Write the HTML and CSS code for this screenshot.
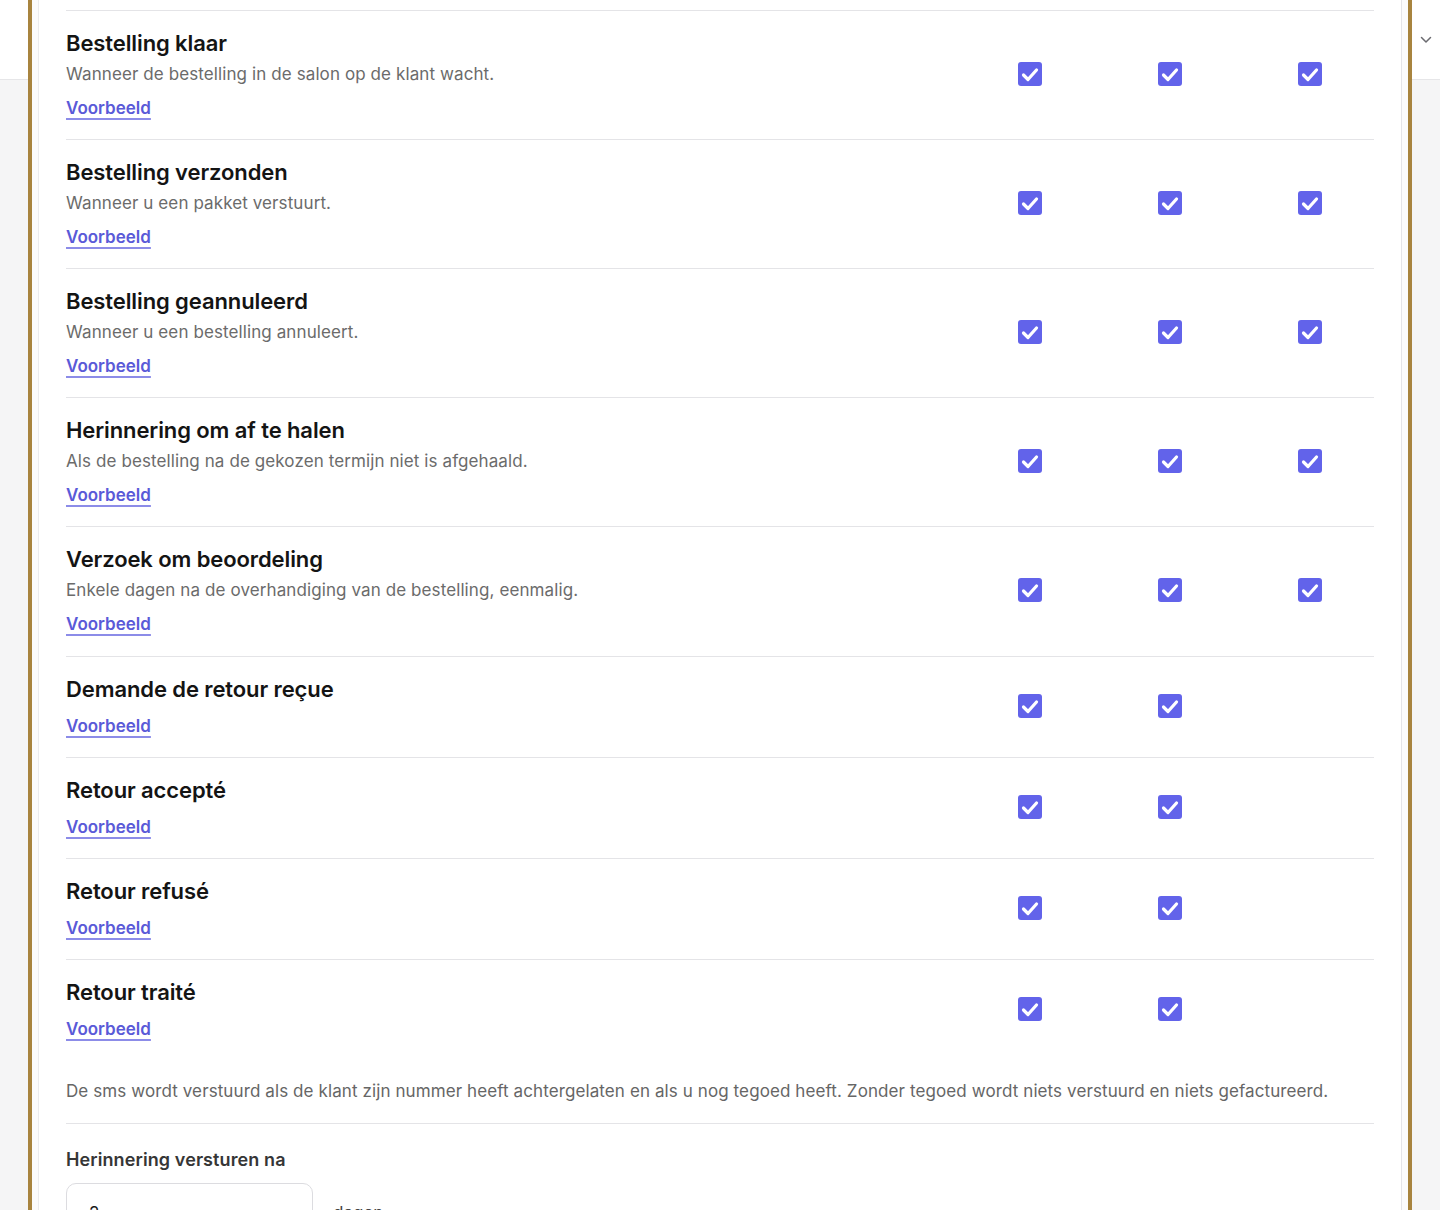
FILE: index.html
```html
<!DOCTYPE html>
<html lang="nl">
<head>
    <meta charset="UTF-8">
    <meta name="viewport" content="width=device-width, initial-scale=1.0">
    <title>Meldingen</title>
    <link rel="stylesheet" href="styles.css">
</head>
<body>
    <div class="page">
        <div class="gutter"></div>

        <div class="panel">
            <div class="card">
                <div class="row">
                    <div class="info">
                        <h3 class="title">Bestelling klaar</h3>
                        <p class="desc">Wanneer de bestelling in de salon op de klant wacht.</p>
                        <a class="link" href="#">Voorbeeld</a>
                    </div>
                    <div class="channels">
                        <span class="check"><svg viewBox="0 0 24 24"><rect width="24" height="24" rx="3"/><path d="M5.5 13 10 17.5 18.5 8"/></svg></span>
                        <span class="check"><svg viewBox="0 0 24 24"><rect width="24" height="24" rx="3"/><path d="M5.5 13 10 17.5 18.5 8"/></svg></span>
                        <span class="check"><svg viewBox="0 0 24 24"><rect width="24" height="24" rx="3"/><path d="M5.5 13 10 17.5 18.5 8"/></svg></span>
                    </div>
                </div>

                <div class="row">
                    <div class="info">
                        <h3 class="title">Bestelling verzonden</h3>
                        <p class="desc">Wanneer u een pakket verstuurt.</p>
                        <a class="link" href="#">Voorbeeld</a>
                    </div>
                    <div class="channels">
                        <span class="check"><svg viewBox="0 0 24 24"><rect width="24" height="24" rx="3"/><path d="M5.5 13 10 17.5 18.5 8"/></svg></span>
                        <span class="check"><svg viewBox="0 0 24 24"><rect width="24" height="24" rx="3"/><path d="M5.5 13 10 17.5 18.5 8"/></svg></span>
                        <span class="check"><svg viewBox="0 0 24 24"><rect width="24" height="24" rx="3"/><path d="M5.5 13 10 17.5 18.5 8"/></svg></span>
                    </div>
                </div>

                <div class="row">
                    <div class="info">
                        <h3 class="title">Bestelling geannuleerd</h3>
                        <p class="desc">Wanneer u een bestelling annuleert.</p>
                        <a class="link" href="#">Voorbeeld</a>
                    </div>
                    <div class="channels">
                        <span class="check"><svg viewBox="0 0 24 24"><rect width="24" height="24" rx="3"/><path d="M5.5 13 10 17.5 18.5 8"/></svg></span>
                        <span class="check"><svg viewBox="0 0 24 24"><rect width="24" height="24" rx="3"/><path d="M5.5 13 10 17.5 18.5 8"/></svg></span>
                        <span class="check"><svg viewBox="0 0 24 24"><rect width="24" height="24" rx="3"/><path d="M5.5 13 10 17.5 18.5 8"/></svg></span>
                    </div>
                </div>

                <div class="row">
                    <div class="info">
                        <h3 class="title">Herinnering om af te halen</h3>
                        <p class="desc">Als de bestelling na de gekozen termijn niet is afgehaald.</p>
                        <a class="link" href="#">Voorbeeld</a>
                    </div>
                    <div class="channels">
                        <span class="check"><svg viewBox="0 0 24 24"><rect width="24" height="24" rx="3"/><path d="M5.5 13 10 17.5 18.5 8"/></svg></span>
                        <span class="check"><svg viewBox="0 0 24 24"><rect width="24" height="24" rx="3"/><path d="M5.5 13 10 17.5 18.5 8"/></svg></span>
                        <span class="check"><svg viewBox="0 0 24 24"><rect width="24" height="24" rx="3"/><path d="M5.5 13 10 17.5 18.5 8"/></svg></span>
                    </div>
                </div>

                <div class="row wide">
                    <div class="info">
                        <h3 class="title">Verzoek om beoordeling</h3>
                        <p class="desc">Enkele dagen na de overhandiging van de bestelling, eenmalig.</p>
                        <a class="link" href="#">Voorbeeld</a>
                    </div>
                    <div class="channels">
                        <span class="check"><svg viewBox="0 0 24 24"><rect width="24" height="24" rx="3"/><path d="M5.5 13 10 17.5 18.5 8"/></svg></span>
                        <span class="check"><svg viewBox="0 0 24 24"><rect width="24" height="24" rx="3"/><path d="M5.5 13 10 17.5 18.5 8"/></svg></span>
                        <span class="check"><svg viewBox="0 0 24 24"><rect width="24" height="24" rx="3"/><path d="M5.5 13 10 17.5 18.5 8"/></svg></span>
                    </div>
                </div>

                <!-- retouren: geen push-kanaal -->
                <div class="row">
                    <div class="info">
                        <h3 class="title">Demande de retour reçue</h3>
                        <a class="link" href="#">Voorbeeld</a>
                    </div>
                    <div class="channels">
                        <span class="check"><svg viewBox="0 0 24 24"><rect width="24" height="24" rx="3"/><path d="M5.5 13 10 17.5 18.5 8"/></svg></span>
                        <span class="check"><svg viewBox="0 0 24 24"><rect width="24" height="24" rx="3"/><path d="M5.5 13 10 17.5 18.5 8"/></svg></span>
                        <span class="check empty"></span>
                    </div>
                </div>

                <div class="row">
                    <div class="info">
                        <h3 class="title">Retour accepté</h3>
                        <a class="link" href="#">Voorbeeld</a>
                    </div>
                    <div class="channels">
                        <span class="check"><svg viewBox="0 0 24 24"><rect width="24" height="24" rx="3"/><path d="M5.5 13 10 17.5 18.5 8"/></svg></span>
                        <span class="check"><svg viewBox="0 0 24 24"><rect width="24" height="24" rx="3"/><path d="M5.5 13 10 17.5 18.5 8"/></svg></span>
                        <span class="check empty"></span>
                    </div>
                </div>

                <div class="row">
                    <div class="info">
                        <h3 class="title">Retour refusé</h3>
                        <a class="link" href="#">Voorbeeld</a>
                    </div>
                    <div class="channels">
                        <span class="check"><svg viewBox="0 0 24 24"><rect width="24" height="24" rx="3"/><path d="M5.5 13 10 17.5 18.5 8"/></svg></span>
                        <span class="check"><svg viewBox="0 0 24 24"><rect width="24" height="24" rx="3"/><path d="M5.5 13 10 17.5 18.5 8"/></svg></span>
                        <span class="check empty"></span>
                    </div>
                </div>

                <div class="row">
                    <div class="info">
                        <h3 class="title">Retour traité</h3>
                        <a class="link" href="#">Voorbeeld</a>
                    </div>
                    <div class="channels">
                        <span class="check"><svg viewBox="0 0 24 24"><rect width="24" height="24" rx="3"/><path d="M5.5 13 10 17.5 18.5 8"/></svg></span>
                        <span class="check"><svg viewBox="0 0 24 24"><rect width="24" height="24" rx="3"/><path d="M5.5 13 10 17.5 18.5 8"/></svg></span>
                        <span class="check empty"></span>
                    </div>
                </div>

                <p class="note">De sms wordt verstuurd als de klant zijn nummer heeft achtergelaten en als u nog tegoed heeft. Zonder tegoed wordt niets verstuurd en niets gefactureerd.</p>

                <div class="reminder">
                    <label class="label" for="dagen">Herinnering versturen na</label>
                    <div class="field">
                        <input type="text" id="dagen" class="input" value="2">
                        <span class="unit">dagen</span>
                    </div>
                </div>
            </div>
        </div>

        <div class="gutter right">
            <svg class="chevron" viewBox="0 0 12 8"><path d="M1.5 1.5 6 6 10.5 1.5"/></svg>
        </div>
    </div>
</body>
</html>
```

FILE: styles.css
```css
html, body {
    margin: 0;
    overflow: hidden;
}
body {
    font-family: Inter, "Noto Sans", sans-serif;
    color: #1a1a1a;
    /* witte topbalk achter het paneel */
    background: linear-gradient(#ffffff 0 79px, #e6e6e8 79px 80px, #f5f5f6 80px);
}
.page {
    display: grid;
    grid-template-columns: 32px 1fr 32px;
    min-height: 100vh;
}
.gutter.right {
    display: flex;
    justify-content: center;
    padding: 36px 0 0 4px;
}
.chevron {
    width: 12px;
    height: 8px;
    fill: none;
    stroke: #6b6b70;
    stroke-width: 1.5;
    stroke-linecap: round;
    stroke-linejoin: round;
}
.panel {
    outline: 4px solid #a8843f;
    background-color: #fbfbfc;
}
.card {
    margin-left: 6px;
    width: 1364px;
    box-sizing: border-box;
    background-color: #ffffff;
    border-left: 1px solid #ebebee;
    border-right: 1px solid #e4e4e8;
    padding: 10px 27px 0 27px;
    min-height: 1400px;
}
.row {
    display: flex;
    align-items: center;
    border-top: 1px solid #e4e4e7;
    padding: 18px 0 19px;
}
.row.wide {
    padding-bottom: 20px;
}
.info {
    flex: 1;
}
.title {
    margin: 0;
    font-size: 22px;
    line-height: 28px;
    font-weight: 600;
    color: #141414;
    letter-spacing: -0.1px;
}
.desc {
    margin: 5px 0 0;
    font-size: 17px;
    line-height: 24px;
    color: #6b6b6b;
    letter-spacing: 0.1px;
}
.link {
    display: inline-block;
    margin-top: 11px;
    font-size: 17px;
    line-height: 24px;
    font-weight: 600;
    color: #5a5ad8;
    text-decoration: underline;
    text-decoration-color: #8c8ce8;
    text-decoration-thickness: 2px;
    text-underline-offset: 4px;
}
.desc + .link {
    margin-top: 10px;
}
.channels {
    display: flex;
    gap: 116px;
    padding-right: 52px;
    margin-bottom: 2px;
}
.check {
    width: 24px;
    height: 24px;
    display: block;
}
.check svg {
    display: block;
    width: 24px;
    height: 24px;
}
.check rect {
    fill: #6263ea;
}
.check path {
    fill: none;
    stroke: #ffffff;
    stroke-width: 3.2;
    stroke-linecap: round;
    stroke-linejoin: round;
}
.note {
    margin: 19px 0 0;
    padding-bottom: 20px;
    border-bottom: 1px solid #e4e4e7;
    font-size: 17px;
    line-height: 24px;
    color: #666666;
    letter-spacing: 0.1px;
}
.reminder {
    padding-top: 24px;
}
.label {
    display: block;
    font-size: 18px;
    line-height: 24px;
    font-weight: 600;
    color: #363636;
    letter-spacing: 0.1px;
}
.field {
    display: flex;
    align-items: center;
    gap: 20px;
    margin-top: 11px;
}
.input {
    width: 247px;
    height: 60px;
    box-sizing: border-box;
    border: 1px solid #dcdce0;
    border-radius: 10px;
    padding: 0 22px;
    font-family: inherit;
    font-size: 17px;
    color: #1a1a1a;
}
.unit {
    font-size: 17px;
    color: #444444;
}
```
